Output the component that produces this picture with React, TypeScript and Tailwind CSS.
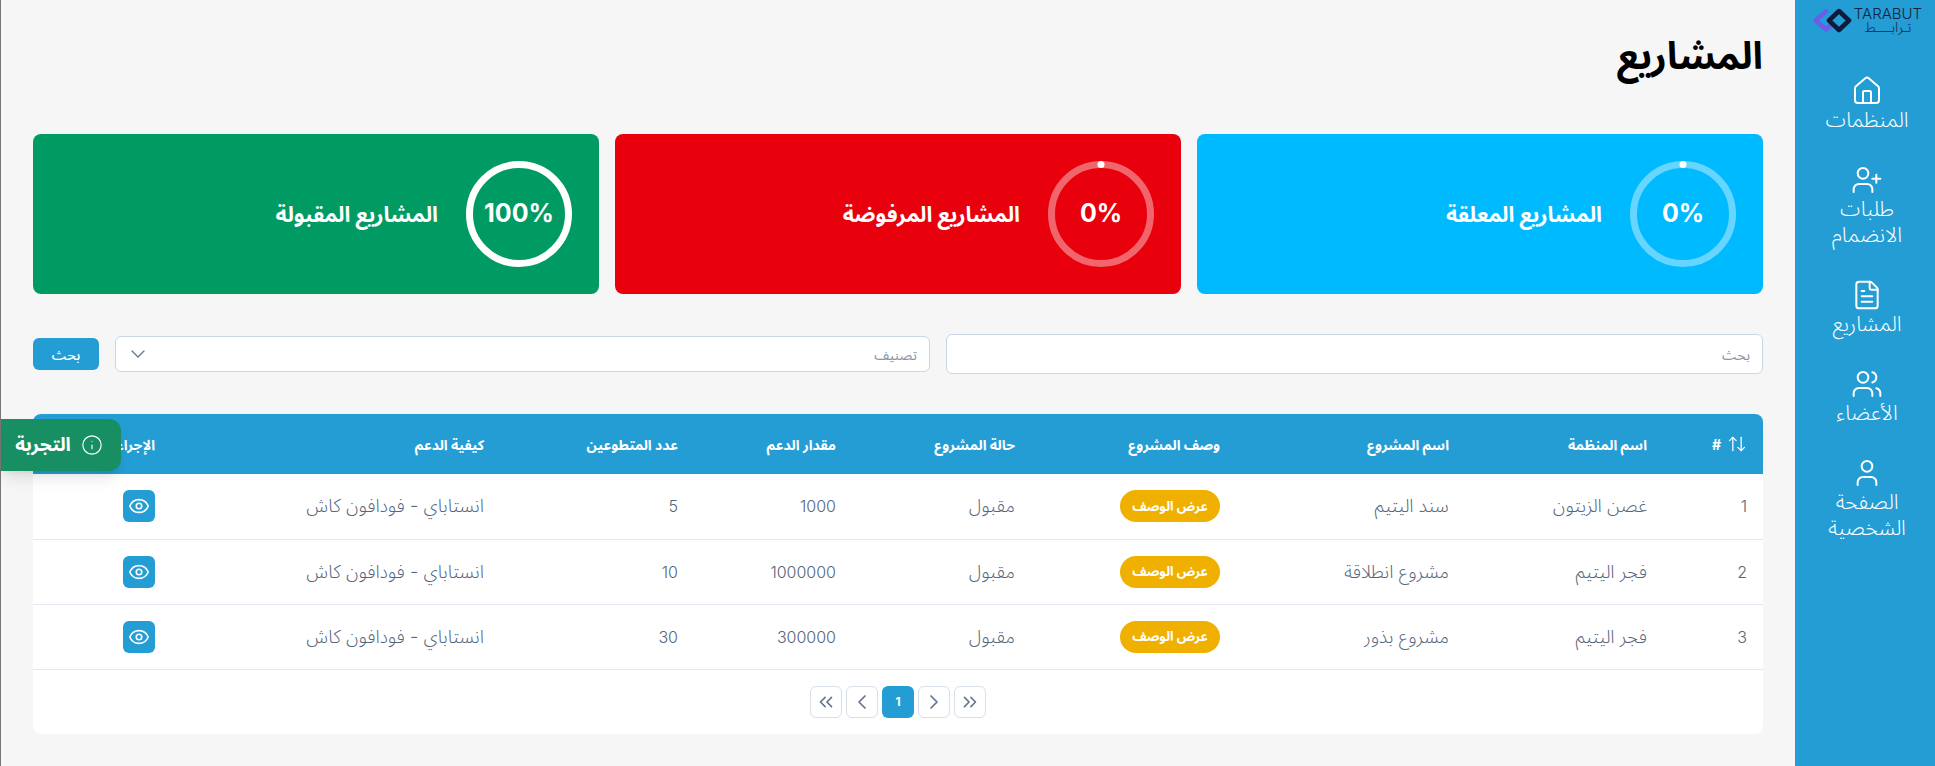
import React from 'react';
import {
  ArrowUpDown,
  ChevronDown,
  ChevronLeft,
  ChevronRight,
  ChevronsLeft,
  ChevronsRight,
  Eye,
  FileText,
  House,
  Info,
  User,
  UserPlus,
  Users,
} from 'lucide-react';

const navItems = [
  { label: 'المنظمات', icon: House },
  { label: 'طلبات الانضمام', icon: UserPlus },
  { label: 'المشاريع', icon: FileText },
  { label: 'الأعضاء', icon: Users },
  { label: 'الصفحة الشخصية', icon: User },
];

const stats = [
  { label: 'المشاريع المعلقة', value: 0, color: 'bg-[#00baff]' },
  { label: 'المشاريع المرفوضة', value: 0, color: 'bg-[#e8000d]' },
  { label: 'المشاريع المقبولة', value: 100, color: 'bg-[#009b62]' },
];

const columns = ['اسم المنظمة', 'اسم المشروع', 'وصف المشروع', 'حالة المشروع', 'مقدار الدعم', 'عدد المتطوعين', 'كيفية الدعم', 'الإجراء'];

const rows = [
  { id: 1, org: 'غصن الزيتون', name: 'سند اليتيم', amount: '1000', volunteers: '5' },
  { id: 2, org: 'فجر اليتيم', name: 'مشروع انطلاقة', amount: '1000000', volunteers: '10' },
  { id: 3, org: 'فجر اليتيم', name: 'مشروع بذور', amount: '300000', volunteers: '30' },
];

const Logo = () => (
  <div dir="ltr" className="flex h-[25px] items-center justify-center gap-[2px] pl-[4px]">
    <svg width="40" height="25" viewBox="0 0 40 25" fill="none" strokeWidth="4.5" strokeLinejoin="round" strokeLinecap="round">
      <path d="M14 3.5 L3.5 12.5 L14 21.5 L20 16" stroke="#6c5ce7" />
      <path d="M27 3 L37 12.5 L27 22 L17 12.5 Z" stroke="#101a3a" />
    </svg>
    <div className="flex w-[68px] flex-col items-center text-[#14233f]">
      <span className="text-[15px] font-light leading-[12px]">TARABUT</span>
      <span dir="rtl" className="text-[14px] font-light leading-[13px]">تـرابــــط</span>
    </div>
  </div>
);

const Sidebar = () => (
  <aside className="flex w-[140px] shrink-0 flex-col bg-[#249dd5] pt-2 text-white">
    <Logo />
    <nav className="mt-[42px] flex flex-col gap-[31px] pl-1">
      {navItems.map(({ label, icon: Icon }) => (
        <a key={label} className="flex flex-col items-center px-6 text-center text-[21px] font-light leading-[26px]">
          <Icon className="h-8 w-8" strokeWidth={1.5} />
          <span>{label}</span>
        </a>
      ))}
    </nav>
  </aside>
);

const StatCard = ({ label, value, color }: { label: string; value: number; color: string }) => (
  <div className={`flex h-40 items-center gap-7 rounded-lg px-[27px] text-white ${color}`}>
    <div className="relative h-[106px] w-[106px]">
      <svg width="106" height="106" viewBox="0 0 106 106" fill="none">
        <circle cx="53" cy="53" r="49.5" stroke="white" strokeOpacity={value === 100 ? 1 : 0.4} strokeWidth="7" />
        {value === 0 && <circle cx="53" cy="3.5" r="3.5" fill="white" />}
      </svg>
      <div className="absolute inset-0 flex items-center justify-center text-[25px] font-bold">{value}%</div>
    </div>
    <span className="text-[21.5px] font-bold">{label}</span>
  </div>
);

const Filters = () => (
  <div className="mt-10 flex items-center gap-4">
    <input
      placeholder="بحث"
      className="h-10 flex-1 rounded-md border border-[#c9d6e6] bg-white px-3 text-[14px] placeholder:text-[#8a94a6]"
    />
    <button className="flex h-9 flex-1 items-center justify-between rounded-md border border-[#c9d6e6] bg-white pl-[10px] pr-3 text-[14px] text-[#8a94a6]">
      <span>تصنيف</span>
      <ChevronDown className="h-6 w-6 text-[#64748b]" strokeWidth={1.25} />
    </button>
    <button className="h-8 w-[66px] rounded-md bg-[#249dd5] text-[14px] font-medium text-white">بحث</button>
  </div>
);

const PageButton = ({ children }: { children: React.ReactNode }) => (
  <button className="flex h-8 w-8 items-center justify-center rounded-md border border-[#d8e0ea] text-[#64748b]">
    {children}
  </button>
);

const ProjectsTable = () => (
  <div className="mt-10 overflow-hidden rounded-lg bg-white">
    <table className="w-full table-fixed text-right">
      <colgroup>
        <col className="w-[100px]" />
        <col className="w-[198px]" />
        <col className="w-[229px]" />
        <col className="w-[205px]" />
        <col className="w-[179px]" />
        <col className="w-[158px]" />
        <col className="w-[194px]" />
        <col className="w-[329px]" />
        <col className="w-[138px]" />
      </colgroup>
      <thead className="bg-[#249dd5] text-[14px] font-bold text-white">
        <tr className="h-[60px]">
          <th className="px-4">
            <span className="flex items-center gap-[6px]">
              <ArrowUpDown className="h-5 w-5" strokeWidth={1.5} />#
            </span>
          </th>
          {columns.map((col) => (
            <th key={col} className="whitespace-nowrap px-4">{col}</th>
          ))}
        </tr>
      </thead>
      <tbody className="text-[18.5px] font-light text-[#56667c]">
        {rows.map((row) => (
          <tr key={row.id} className="h-[65px] border-b border-[#e2e8f0]">
            <td className="px-4 text-[16px]">{row.id}</td>
            <td className="px-4">{row.org}</td>
            <td className="px-4">{row.name}</td>
            <td className="px-4">
              <span className="inline-flex h-8 w-[100px] items-center justify-center rounded-full bg-[#f0b000] text-[13px] font-bold text-white">
                عرض الوصف
              </span>
            </td>
            <td className="px-4">مقبول</td>
            <td className="px-4 text-[16px]">{row.amount}</td>
            <td className="px-4 text-[16px]">{row.volunteers}</td>
            <td className="px-4">انستاباي - فودافون كاش</td>
            <td className="px-4">
              <button className="flex h-8 w-8 items-center justify-center rounded-md bg-[#249dd5] text-white">
                <Eye className="h-[22px] w-[22px]" strokeWidth={1.75} />
              </button>
            </td>
          </tr>
        ))}
      </tbody>
    </table>
    <div className="flex h-[64px] items-center justify-center gap-1">
      <PageButton><ChevronsRight className="h-[22px] w-[22px]" strokeWidth={1.75} /></PageButton>
      <PageButton><ChevronRight className="h-6 w-6" strokeWidth={1.75} /></PageButton>
      <span className="flex h-8 w-8 items-center justify-center rounded-md bg-[#249dd5] text-[12px] font-bold text-white">1</span>
      <PageButton><ChevronLeft className="h-6 w-6" strokeWidth={1.75} /></PageButton>
      <PageButton><ChevronsLeft className="h-[22px] w-[22px]" strokeWidth={1.75} /></PageButton>
    </div>
  </div>
);

export default function App() {
  return (
    <div dir="rtl" className="flex h-[766px] overflow-hidden bg-[#f6f6f6] font-['Inter','Noto_Sans_Arabic','DejaVu_Sans',sans-serif]">
      <Sidebar />
      <main className="relative flex-1 border-l border-[#777777] pl-8 pr-8 pt-[35px]">
        <h1 className="h-[40px] text-[38px] font-bold leading-[40px] text-black">المشاريع</h1>
        <div className="mt-[59px] grid grid-cols-3 gap-4">
          {stats.map((s) => (
            <StatCard key={s.label} {...s} />
          ))}
        </div>
        <Filters />
        <ProjectsTable />
        <div className="absolute left-0 top-[419px] flex h-[52px] w-[120px] items-center justify-center gap-[10px] rounded-r-xl bg-[#178f63] pr-1 text-[19px] font-bold text-white shadow-lg">
          <Info className="h-[22px] w-[22px]" strokeWidth={1.25} />
          <span>التجربة</span>
        </div>
      </main>
    </div>
  );
}
